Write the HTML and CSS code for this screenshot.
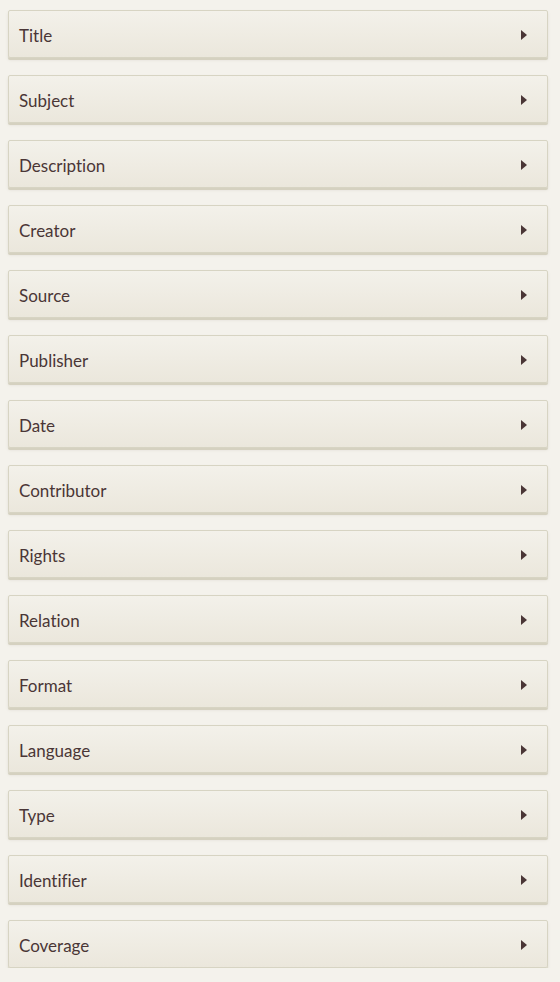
FILE: index.html
```html
<!DOCTYPE html>
<html lang="en">
<head>
<meta charset="utf-8">
<title>Metadata</title>
<link rel="stylesheet" href="styles.css">
</head>
<body>
<div class="list">
  <div class="item"><span class="label">Title</span><span class="arrow"></span></div>
  <div class="item"><span class="label">Subject</span><span class="arrow"></span></div>
  <div class="item"><span class="label">Description</span><span class="arrow"></span></div>
  <div class="item"><span class="label">Creator</span><span class="arrow"></span></div>
  <div class="item"><span class="label">Source</span><span class="arrow"></span></div>
  <div class="item"><span class="label">Publisher</span><span class="arrow"></span></div>
  <div class="item"><span class="label">Date</span><span class="arrow"></span></div>
  <div class="item"><span class="label">Contributor</span><span class="arrow"></span></div>
  <div class="item"><span class="label">Rights</span><span class="arrow"></span></div>
  <div class="item"><span class="label">Relation</span><span class="arrow"></span></div>
  <div class="item"><span class="label">Format</span><span class="arrow"></span></div>
  <div class="item"><span class="label">Language</span><span class="arrow"></span></div>
  <div class="item"><span class="label">Type</span><span class="arrow"></span></div>
  <div class="item"><span class="label">Identifier</span><span class="arrow"></span></div>
  <div class="item"><span class="label">Coverage</span><span class="arrow"></span></div>
</div>
</body>
</html>
```
FILE: styles.css
```css
html, body {
  margin: 0;
  padding: 0;
  background: #f4f2ec;
}
body {
  font-family: Lato, "Open Sans", sans-serif;
  color: #4a3636;
}
.list {
  display: flex;
  flex-direction: column;
  gap: 17px;
  padding: 10px 12px 0 8px;
}
.item {
  box-sizing: border-box;
  height: 48px;
  display: flex;
  align-items: center;
  justify-content: space-between;
  padding: 0 20px 0 10px;
  border: 1px solid #d7d4c3;
  border-radius: 2px;
  background: linear-gradient(#f3f1ea, #ebe7dc);
  box-shadow: 0 2px 0 #d5d1c0, 0 2px 3px rgba(120, 110, 80, 0.15);
}
.label {
  font-size: 17px;
  line-height: 20px;
  padding-top: 3px;
  font-variant-ligatures: none;
}
.arrow {
  width: 0;
  height: 0;
  margin-top: 1px;
  border-top: 5.5px solid transparent;
  border-bottom: 5.5px solid transparent;
  border-left: 6px solid #4a3636;
}
```
